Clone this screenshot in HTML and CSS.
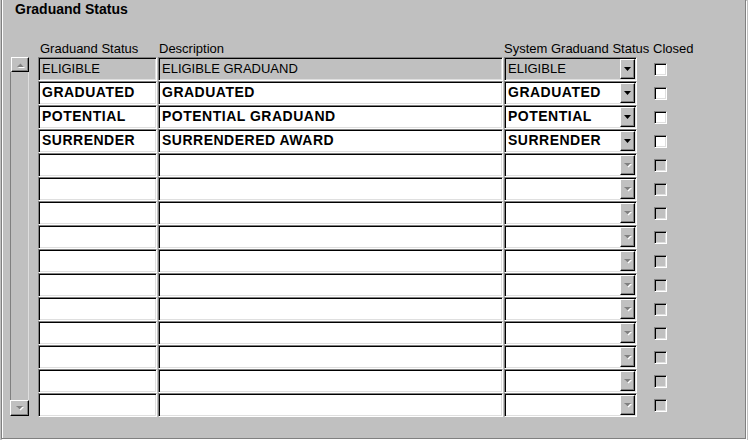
FILE: index.html
```html
<!DOCTYPE html>
<html>
<head>
<meta charset="utf-8">
<link rel="stylesheet" href="styles.css">
</head>
<body>
<div class="frame">
  <div class="title">Graduand Status</div>
  <div class="content">
    <div class="scrollbar">
      <div class="sbtn"><svg width="9" height="6" viewBox="0 0 9 6"><polygon points="1,5 8,5 4.5,1.5" fill="#fff" transform="translate(1,1)"/><polygon points="1,5 8,5 4.5,1.5" fill="#808080"/></svg></div>
      <div class="track"></div>
      <div class="sbtn"><svg width="9" height="6" viewBox="0 0 9 6"><polygon points="1,1 8,1 4.5,4.5" fill="#fff" transform="translate(1,1)"/><polygon points="1,1 8,1 4.5,4.5" fill="#808080"/></svg></div>
    </div>
    <div class="grid">
      <div class="hd hd-status">Graduand Status</div>
      <div class="hd">Description</div>
      <div class="hd hd-sys">System Graduand Status</div>
      <div class="hd hd-closed">Closed</div>

      <div class="f cur">ELIGIBLE</div>
      <div class="f cur">ELIGIBLE GRADUAND</div>
      <div class="f cur pop"><span class="ptxt">ELIGIBLE</span><span class="dd"><svg width="7" height="4"><polygon points="0,0 7,0 3.5,4" fill="#000"/></svg></span></div>
      <div class="cbcell"><span class="cb on"></span></div>

      <div class="f val">GRADUATED</div>
      <div class="f val">GRADUATED</div>
      <div class="f val pop"><span class="ptxt">GRADUATED</span><span class="dd"><svg width="7" height="4"><polygon points="0,0 7,0 3.5,4" fill="#000"/></svg></span></div>
      <div class="cbcell"><span class="cb on"></span></div>

      <div class="f val">POTENTIAL</div>
      <div class="f val">POTENTIAL GRADUAND</div>
      <div class="f val pop"><span class="ptxt">POTENTIAL</span><span class="dd"><svg width="7" height="4"><polygon points="0,0 7,0 3.5,4" fill="#000"/></svg></span></div>
      <div class="cbcell"><span class="cb on"></span></div>

      <div class="f val">SURRENDER</div>
      <div class="f val">SURRENDERED AWARD</div>
      <div class="f val pop"><span class="ptxt">SURRENDER</span><span class="dd"><svg width="7" height="4"><polygon points="0,0 7,0 3.5,4" fill="#000"/></svg></span></div>
      <div class="cbcell"><span class="cb on"></span></div>
    </div>
  </div>
</div>
<script>
(function(){
  var g = document.querySelector('.grid');
  var tri = '<svg width="8" height="5"><polygon points="1,1 8,1 4.5,4.5" fill="#fff"/><polygon points="0,0 7,0 3.5,3.5" fill="#808080"/></svg>';
  for (var i = 0; i < 11; i++) {
    g.insertAdjacentHTML('beforeend',
      '<div class="f"></div><div class="f"></div>' +
      '<div class="f pop"><span class="ptxt"></span><span class="dd">' + tri + '</span></div>' +
      '<div class="cbcell"><span class="cb"></span></div>');
  }
})();
</script>
</body>
</html>
```

FILE: styles.css
```css
html, body {
  margin: 0;
  padding: 0;
  background: #c0c0c0;
}
body {
  font-family: "Liberation Sans", Arial, sans-serif;
  color: #000;
  width: 748px;
  height: 440px;
  overflow: hidden;
}
.frame {
  box-sizing: border-box;
  margin-left: 1px;
  width: 745px;
  height: 439px;
  border: 1px solid #808080;
  border-top: 0;
  box-shadow: 1px 1px 0 #fff, inset 1px 0 0 #fff;
}
.title {
  font-weight: bold;
  font-size: 14px;
  line-height: 17px;
  padding: 1px 0 0 13px;
  height: 23px;
}
.content {
  display: flex;
  align-items: flex-start;
  padding-left: 8px;
  margin-top: 17px;
}
.scrollbar {
  margin-top: 16px;
  width: 19px;
  height: 359px;
  display: flex;
  flex-direction: column;
}
.sbtn {
  box-sizing: border-box;
  width: 18px;
  height: 15px;
  margin-left: 1px;
  background: #c0c0c0;
  border: 1px solid;
  border-color: #fff #000 #000 #fff;
  box-shadow: inset -1px -1px 0 #808080;
  display: flex;
  align-items: center;
  justify-content: center;
}
.sbtn:last-child {
  margin-left: 0;
  width: 19px;
  height: 16px;
}
.track {
  flex: 1;
  box-sizing: border-box;
  border-left: 1px solid #808080;
  border-right: 1px solid #dfdfdf;
  width: 19px;
}
.grid {
  margin-left: 9px;
  display: grid;
  grid-template-columns: 119px 345px 133px 60px;
  column-gap: 1px;
  grid-auto-rows: 24px;
  grid-template-rows: 16px;
}
.hd {
  font-size: 13px;
  line-height: 16px;
  padding-left: 1px;
  white-space: nowrap;
}
.hd-status { padding-left: 2px; }
.hd-sys { padding-left: 0; }
.hd-closed { padding-left: 15px; }
.f {
  box-sizing: border-box;
  height: 24px;
  border: 1px solid;
  border-color: #808080 #fff #fff #808080;
  box-shadow: inset 1px 1px 0 #000, inset -1px -1px 0 #dfdfdf;
  background: #fff;
  padding-left: 3px;
  font-size: 14px;
  line-height: 21px;
  white-space: nowrap;
  overflow: hidden;
}
.f.cur {
  background: #c0c0c0;
  font-size: 13px;
  line-height: 22px;
}
.f.val {
  font-weight: bold;
  letter-spacing: 0.5px;
}
.pop {
  display: flex;
  align-items: flex-start;
  padding-right: 1px;
}
.ptxt {
  flex: 1;
  overflow: hidden;
}
.dd {
  box-sizing: border-box;
  flex: none;
  width: 15px;
  height: 20px;
  margin-top: 1px;
  background: #c0c0c0;
  border: 1px solid;
  border-color: #fff #000 #000 #fff;
  box-shadow: inset -1px -1px 0 #808080;
  display: flex;
  align-items: center;
  justify-content: center;
}
.dd svg { display: block; }
.cbcell {
  display: flex;
  align-items: center;
  padding-left: 16px;
}
.cb {
  box-sizing: border-box;
  display: block;
  width: 13px;
  height: 13px;
  border: 1px solid;
  border-color: #808080 #fff #fff #808080;
  box-shadow: inset 1px 1px 0 #000, inset -1px -1px 0 #dfdfdf;
  background: #c0c0c0;
}
.cb.on { background: #fff; }
```
